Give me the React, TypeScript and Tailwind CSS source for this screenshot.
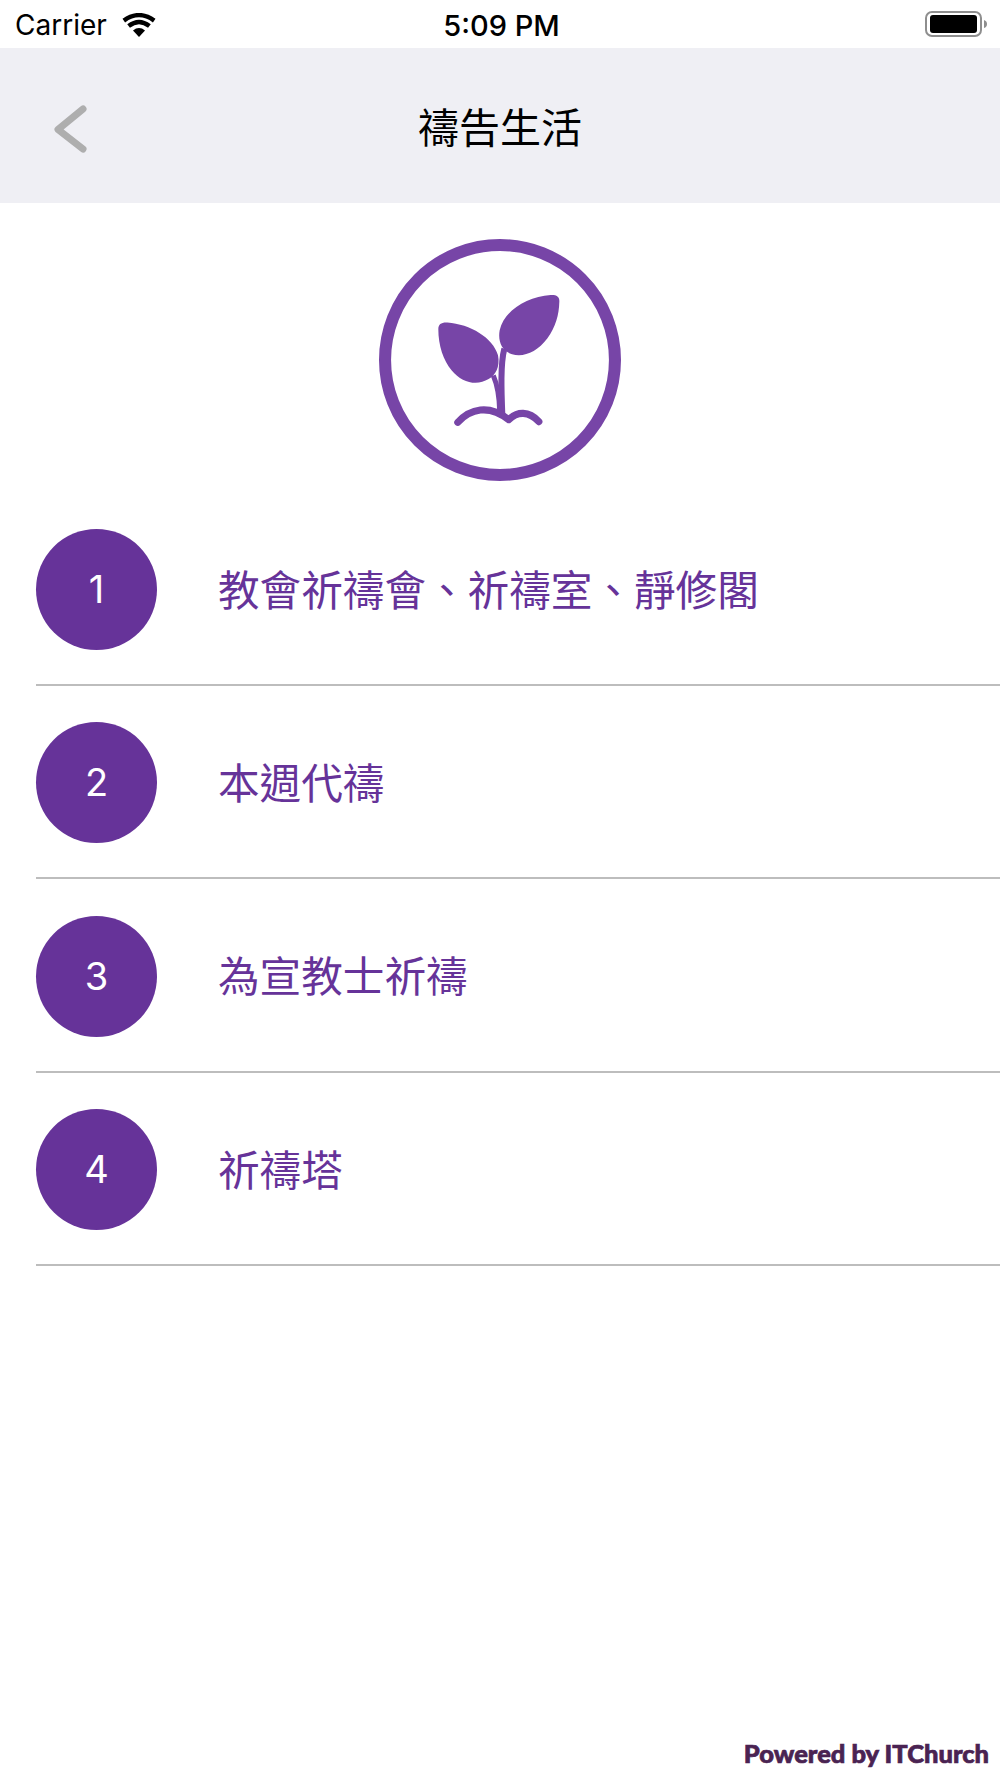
const items = ["教會祈禱會、祈禱室、靜修閣", "本週代禱", "為宣教士祈禱", "祈禱塔"];

const cjk = "font-['Inter','Noto_Sans_CJK_TC',sans-serif]";

function Wifi() {
  return (
    <svg width="34" height="24" viewBox="0 0 34 24" fill="none" className="ml-[15px] translate-y-[1px]">
      <path d="M17 24 L11 17.4 Q17 12.8 23 17.4 Z" fill="#000" />
      <path d="M6.6 13 Q17 4.8 27.4 13" stroke="#000" strokeWidth="4.4" />
      <path d="M1.8 7.6 Q17 -3.4 32.2 7.6" stroke="#000" strokeWidth="4.4" />
    </svg>
  );
}

function Battery() {
  return (
    <svg width="63" height="26" viewBox="0 0 63 26" fill="none">
      <rect x="1" y="1" width="55" height="24" rx="6" stroke="#8e8e8e" strokeWidth="2" />
      <rect x="5" y="4" width="47" height="18" rx="3" fill="#000" />
      <path d="M59 9 Q62 10 62 13 Q62 16 59 17 Z" fill="#8e8e8e" />
    </svg>
  );
}

function Sprout() {
  return (
    <svg width="242" height="242" viewBox="58 58 722 722" fill="none">
      <circle cx="419" cy="419" r="343" stroke="#7745a7" strokeWidth="36" />
      <path
        d="M235 327 C235 312 244 306 262 307 C330 312 398 352 413 405 C420 440 405 465 385 476 C350 497 305 487 275 450 C250 420 235 375 235 327 Z"
        fill="#7745a7"
      />
      <path
        d="M596 245 C597 230 588 224 570 225 C500 231 432 270 418 330 C412 365 425 392 455 402 C490 412 530 395 560 355 C585 320 595 285 596 245 Z"
        fill="#7745a7"
      />
      <path d="M432 385 C420 430 423 510 426 585" stroke="#7745a7" strokeWidth="18" />
      <path d="M399 465 C412 495 417 530 418 570" stroke="#7745a7" strokeWidth="15" />
      <path
        d="M293 605 C330 565 385 550 445 597 C470 572 505 570 535 603"
        stroke="#7745a7"
        strokeWidth="21"
        strokeLinecap="round"
        strokeLinejoin="round"
      />
    </svg>
  );
}

export default function App() {
  return (
    <div className={`flex h-[1778px] w-full flex-col overflow-hidden bg-white ${cjk}`}>
      <div className="grid h-[48px] grid-cols-[1fr_auto_1fr] items-center bg-white pl-[15px] pr-[12px]">
        <div className="flex items-center">
          <span className="translate-y-[1px] text-[28px] leading-none text-black">Carrier</span>
          <Wifi />
        </div>
        <span className="translate-y-[1px] text-[29px] font-medium leading-none text-black">5:09 PM</span>
        <div className="flex justify-end">
          <Battery />
        </div>
      </div>

      <div className="grid h-[155px] grid-cols-[1fr_auto_1fr] items-center bg-[#efeff4] pl-[52px]">
        <svg width="36" height="50" viewBox="0 0 36 50" fill="none" className="translate-y-[3px]">
          <path d="M31 5 L6 25.5 L31 45" stroke="#aeaeae" strokeWidth="7" strokeLinecap="round" strokeLinejoin="round" />
        </svg>
        <span className="-translate-x-[26px] translate-y-[3px] text-[41px] leading-none text-black">禱告生活</span>
        <span />
      </div>

      <div className="mt-[36px] flex justify-center">
        <Sprout />
      </div>

      <ul className="mt-[48px] flex flex-col gap-[36.3px] pl-[36px]">
        {items.map((label, i) => (
          <li key={label} className="flex flex-col gap-[34px]">
            <div className="flex items-center">
              <div className="flex h-[121px] w-[121px] items-center justify-center rounded-full bg-[#663399] text-[38px] text-white">
                {i + 1}
              </div>
              <span className="ml-[61px] translate-y-[2px] text-[41.6px] leading-none text-[#663399]">{label}</span>
            </div>
            <div className="h-[2px] bg-[#bdbdbd]" />
          </li>
        ))}
      </ul>

      <div className="mt-auto flex justify-end pb-[10px] pr-[11px]">
        <span className="font-['Lato',sans-serif] text-[25.5px] font-black leading-[30px] text-[#4a2352] [-webkit-text-stroke:0.7px_#4a2352]">
          Powered by ITChurch
        </span>
      </div>
    </div>
  );
}
